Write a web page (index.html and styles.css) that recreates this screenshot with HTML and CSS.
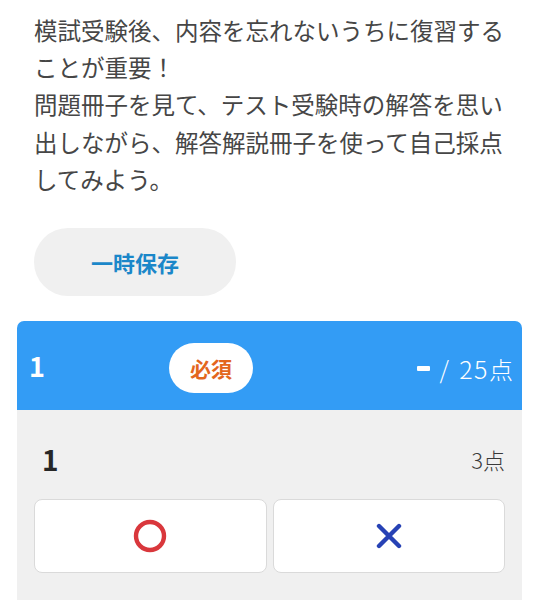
FILE: index.html
```html
<!DOCTYPE html>
<html lang="ja">
<head>
<meta charset="utf-8">
<link rel="stylesheet" href="styles.css">
</head>
<body>
<div class="page">
  <p class="intro">模試受験後、内容を忘れないうちに復習することが重要！<br>問題冊子を見て、テスト受験時の解答を思い出しながら、解答解説冊子を使って自己採点してみよう。</p>
  <button class="save">一時保存</button>
  <section class="card">
    <header class="card-head">
      <span class="q-no">1</span>
      <span class="badge">必須</span>
      <span class="score"><span class="dash"></span><span class="pts">/ <span class="num">25</span>点</span></span>
    </header>
    <div class="card-body">
      <div class="item-row">
        <span class="item-no">1</span>
        <span class="item-pt">3点</span>
      </div>
      <div class="choices">
        <button class="choice">
          <svg width="34" height="34" viewBox="0 0 34 34"><circle cx="17" cy="17" r="14" fill="none" stroke="#d9373c" stroke-width="4.4"/></svg>
        </button>
        <button class="choice">
          <svg width="26" height="26" viewBox="0 0 26 26"><path d="M3 3 L23 23 M23 3 L3 23" stroke="#2742b5" stroke-width="4.4" stroke-linecap="round"/></svg>
        </button>
      </div>
    </div>
  </section>
</div>
</body>
</html>
```
FILE: styles.css
```css
html, body {
  margin: 0;
  padding: 0;
  background: #ffffff;
}
body {
  font-family: "Noto Sans CJK JP", "Noto Sans", sans-serif;
  color: #444444;
}
.page {
  display: flex;
  flex-direction: column;
  align-items: flex-start;
}
.intro {
  margin: 12px 0 0 34px;
  width: 490px;
  font-size: 23.5px;
  line-height: 37.2px;
  color: #464646;
}
.save {
  margin: 30px 0 0 34px;
  width: 202px;
  height: 68px;
  border: none;
  border-radius: 34px;
  background: #f0f0f0;
  color: #1b87c9;
  font-family: "Noto Sans CJK JP", sans-serif;
  font-weight: 700;
  font-size: 22px;
  padding: 0;
}
.card {
  margin: 25px 0 0 17px;
  width: 505px;
}
.card-head {
  height: 89px;
  background: #339cf5;
  border-radius: 7px 7px 0 0;
  display: flex;
  align-items: center;
  padding: 0 9px 0 12px;
  color: #ffffff;
}
.q-no {
  font-weight: 700;
  font-size: 27px;
  width: 140px;
}
.badge {
  background: #ffffff;
  color: #e3661d;
  font-weight: 700;
  font-size: 21px;
  height: 50px;
  width: 84px;
  border-radius: 25px;
  display: flex;
  align-items: center;
  justify-content: center;
  margin-top: 4px;
}
.score {
  margin-left: auto;
  margin-top: 4px;
  display: flex;
  align-items: center;
  gap: 9px;
}
.dash {
  width: 13px;
  height: 5px;
  border-radius: 1px;
  background: #ffffff;
  margin-top: 2px;
}
.pts {
  font-size: 24px;
  font-weight: 300;
  word-spacing: 5px;
}
.num {
  font-size: 25px;
  letter-spacing: 1.5px;
}
.card-body {
  background: #f0f0f0;
  padding: 29px 17px 40px;
}
.item-row {
  display: flex;
  justify-content: space-between;
  align-items: center;
  padding-left: 8px;
  margin-bottom: 20px;
}
.item-no {
  font-weight: 700;
  font-size: 28px;
  color: #262626;
}
.item-pt {
  font-size: 22px;
  font-weight: 300;
  color: #3a3a3a;
}
.choices {
  display: grid;
  grid-template-columns: 1fr 1fr;
  gap: 6px;
}
.choice {
  height: 74px;
  background: #ffffff;
  border: 1.5px solid #dadada;
  border-radius: 8px;
  display: flex;
  align-items: center;
  justify-content: center;
  padding: 0;
}
```
